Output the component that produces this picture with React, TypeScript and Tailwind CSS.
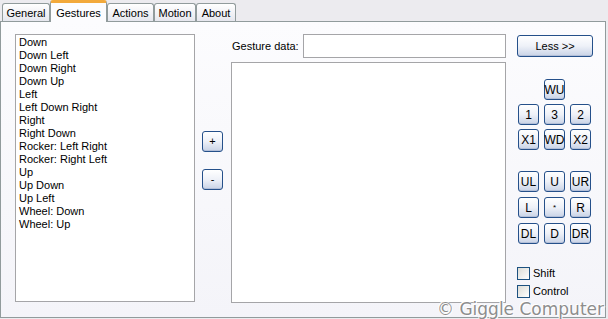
import type { ReactNode } from 'react';

const GESTURES = [
    'Down',
    'Down Left',
    'Down Right',
    'Down Up',
    'Left',
    'Left Down Right',
    'Right',
    'Right Down',
    'Rocker: Left Right',
    'Rocker: Right Left',
    'Up',
    'Up Down',
    'Up Left',
    'Wheel: Down',
    'Wheel: Up',
];

const TABS = [
    { label: 'General', w: 'w-[48px]' },
    { label: 'Gestures', w: 'w-[57px]' },
    { label: 'Actions', w: 'w-[47px]' },
    { label: 'Motion', w: 'w-[42px]' },
    { label: 'About', w: 'w-[40px]' },
];

// grid rows of the mouse pad, null = empty cell
const PAD_TOP = [
    [null, 'WU', null],
    ['1', '3', '2'],
    ['X1', 'WD', 'X2'],
];
const PAD_DIR = [
    ['UL', 'U', 'UR'],
    ['L', '*', 'R'],
    ['DL', 'D', 'DR'],
];

function XpButton({ children, className = '' }: { children: ReactNode; className?: string }) {
    return (
        <div
            className={`flex items-center justify-center rounded-[3px] border border-[#25508a] bg-gradient-to-b from-white via-[#eef1f8] to-[#c9d3e6] text-[11px] leading-none text-black shadow-[inset_0_-1px_0_#b3bfd8] ${className}`}
        >
            {children}
        </div>
    );
}

function PadRow({ row }: { row: (string | null)[] }) {
    return (
        <div className="flex gap-[5px] pl-[1px]">
            {row.map((k, i) =>
                k ? (
                    <XpButton key={i} className="h-[21px] w-[21px] text-[12px]">
                        {k === '*' ? <span className="text-[8px]">*</span> : k}
                    </XpButton>
                ) : (
                    <div key={i} className="h-[21px] w-[21px]" />
                )
            )}
        </div>
    );
}

function CheckRow({ label }: { label: string }) {
    return (
        <div className="flex items-center gap-[3px]">
            <div className="h-[13px] w-[13px] border border-[#1c5180] bg-gradient-to-br from-[#dcdcd6] to-white" />
            <span className="text-[11px] leading-none">{label}</span>
        </div>
    );
}

export default function App() {
    return (
        <div
            className="relative h-[319px] w-[608px] overflow-hidden bg-[#ecebef] text-black"
            style={{ fontFamily: '"Liberation Sans", Arial, sans-serif' }}
        >
            {/* Tab strip */}
            <div className="flex h-[21px] items-end pl-[2px]">
                {TABS.map(t =>
                    t.label === 'Gestures' ? (
                        <div
                            key={t.label}
                            className={`relative z-10 -mb-[1px] flex h-[22px] ${t.w} items-start justify-center rounded-t-[3px] border-x border-[#919b9c] border-t-[3px] border-t-[#f2a93b] bg-[#fcfcfe] pt-[2px] text-[11px]`}
                        >
                            {t.label}
                        </div>
                    ) : (
                        <div
                            key={t.label}
                            className={`flex h-[18px] ${t.w} items-center justify-center rounded-t-[3px] border border-b-0 border-[#919b9c] bg-gradient-to-b from-white to-[#e6e7ee] pt-[1px] text-[11px]`}
                        >
                            {t.label}
                        </div>
                    )
                )}
            </div>

            {/* Tab page */}
            <div className="flex h-[297px] w-[606px] border border-[#919b9c] bg-gradient-to-b from-[#fcfcfe] to-[#f4f4f9] pl-[14px] pt-[12px]">
                {/* gesture list */}
                <div className="h-[268px] w-[180px] border border-[#a5a5a8] bg-white pl-[3px] pt-[1px]">
                    {GESTURES.map(g => (
                        <div key={g} className="h-[13px] text-[11px] leading-[13px]">
                            {g}
                        </div>
                    ))}
                </div>

                {/* add / remove */}
                <div className="ml-[7px] flex flex-col gap-[17px] pt-[97px]">
                    <XpButton className="h-[21px] w-[21px]">+</XpButton>
                    <XpButton className="h-[21px] w-[21px]">-</XpButton>
                </div>

                {/* gesture data */}
                <div className="ml-[8px] flex w-[275px] flex-col">
                    <div className="flex h-[24px] items-center">
                        <span className="ml-[1px] w-[71px] text-[11px]">Gesture data:</span>
                        <div className="h-[24px] flex-1 border border-[#a5a5a8] bg-white" />
                    </div>
                    <div className="mt-[4px] h-[241px] border border-[#a5a5a8] bg-white" />
                </div>

                {/* mouse pad */}
                <div className="ml-[11px] flex w-[77px] flex-col">
                    <XpButton className="mt-[1px] h-[22px] w-[76px]">Less &gt;&gt;</XpButton>
                    <div className="mt-[22px] flex flex-col gap-[4px]">
                        {PAD_TOP.map((r, i) => (
                            <PadRow key={i} row={r} />
                        ))}
                    </div>
                    <div className="mt-[21px] flex flex-col gap-[5px]">
                        {PAD_DIR.map((r, i) => (
                            <PadRow key={i} row={r} />
                        ))}
                    </div>
                    <div className="mt-[23px] flex flex-col gap-[5px]">
                        <CheckRow label="Shift" />
                        <CheckRow label="Control" />
                    </div>
                </div>
            </div>

            {/* watermark */}
            <div
                className="absolute bottom-[1px] right-[4px] text-[17px] leading-none text-[#8d8d8d]"
                style={{
                    fontFamily: '"DejaVu Sans", Verdana, sans-serif',
                    textShadow: '0 0 1px #fff, 0 0 1px #fff, 1px 1px 0 #fff, -1px -1px 0 #fff',
                }}
            >
                © Giggle Computer
            </div>
        </div>
    );
}
